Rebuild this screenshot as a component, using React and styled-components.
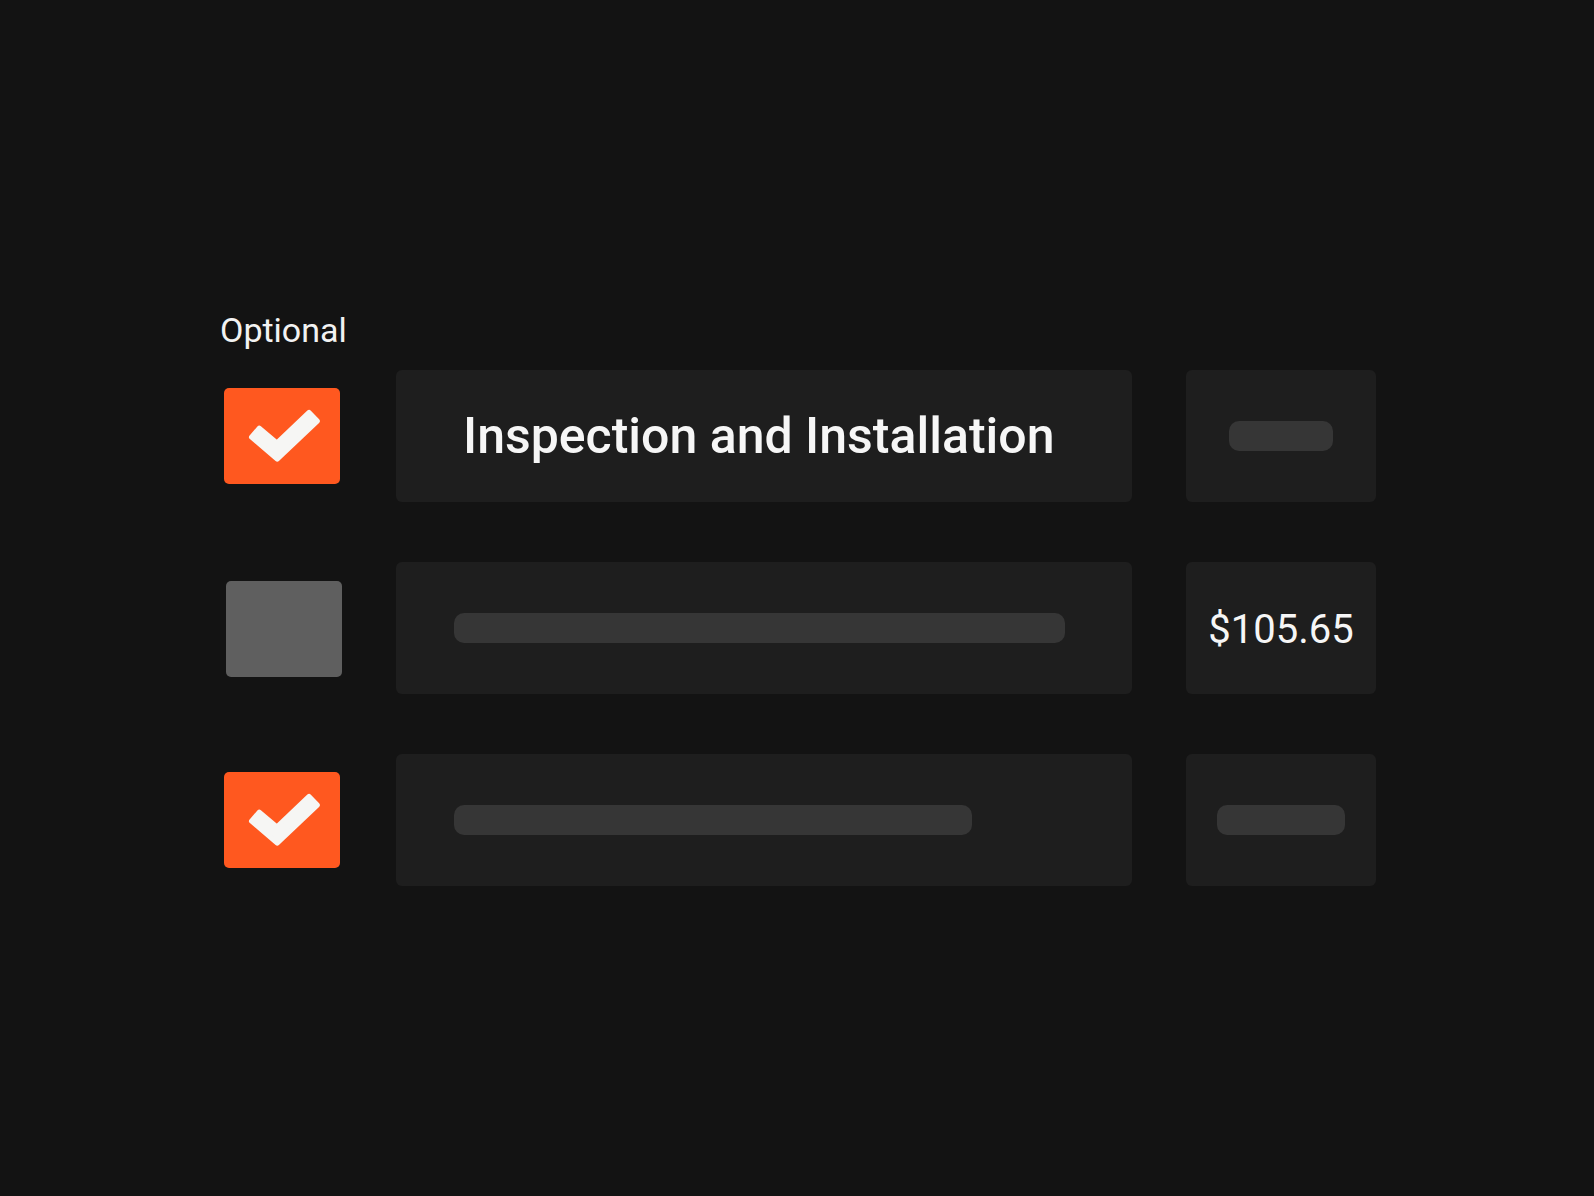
import React from "react";
import styled, { createGlobalStyle } from "styled-components";

const GlobalStyle = createGlobalStyle`
  html, body {
    margin: 0;
    padding: 0;
    background: #131313;
  }
  body {
    font-family: Roboto, "Noto Sans", "Liberation Sans", sans-serif;
    color: #f4f4f4;
  }
`;

const Page = styled.main`
  min-height: 100vh;
  box-sizing: border-box;
  padding: 310px 0 0 220px;
  background: #131313;
`;

const List = styled.section`
  width: 1156px;
  display: flex;
  flex-direction: column;
`;

const Label = styled.div`
  font-size: 34px;
  line-height: 40px;
  font-weight: 400;
  color: #f2f2f2;
  margin-bottom: 20px;
`;

const Rows = styled.div`
  display: flex;
  flex-direction: column;
  gap: 60px;
`;

const Row = styled.div`
  display: grid;
  grid-template-columns: 176px 736px 190px;
  height: 132px;
  & > :nth-child(3) {
    margin-left: 54px;
  }
`;

const CheckCell = styled.div`
  display: flex;
  align-items: center;
  padding-left: ${(p) => p.$offset}px;
  padding-top: ${(p) => p.$dy * 2}px;
`;

const Box = styled.div`
  width: 116px;
  height: 96px;
  border-radius: 5px;
  background: ${(p) => (p.$checked ? "#ff581f" : "#5f5f5f")};
  display: flex;
  align-items: center;
  justify-content: center;
`;

const Card = styled.div`
  background: #1e1e1e;
  border-radius: 6px;
  display: flex;
  align-items: center;
  box-sizing: border-box;
  padding: 0 ${(p) => (p.$center ? 0 : 58)}px;
  justify-content: ${(p) => (p.$center ? "center" : "flex-start")};
`;

const PriceCard = styled(Card)`
  width: 190px;
`;

const Title = styled.div`
  font-size: 50px;
  font-weight: 500;
  line-height: 1;
  color: #f6f6f6;
  padding-left: 9px;
  white-space: nowrap;
`;

const Price = styled.div`
  font-size: 40px;
  font-weight: 400;
  line-height: 1;
  color: #f6f6f6;
  padding-top: 3px;
  white-space: nowrap;
`;

const Pill = styled.div`
  height: 30px;
  border-radius: 10px;
  background: #363636;
  flex: none;
`;

const Check = () => (
  <svg width="116" height="96" viewBox="0 0 116 96" aria-hidden="true">
    <polygon
      points="35.3,40.05 52.8,54.94 85.06,24.36 93.32,33.08 53.21,71.06 27.51,49.19"
      fill="#f6f6f4"
      stroke="#f6f6f4"
      strokeWidth="5"
      strokeLinejoin="round"
    />
  </svg>
);

const Checkbox = ({ checked, offset = 4, dy = 0 }) => (
  <CheckCell $offset={offset} $dy={dy}>
    <Box $checked={checked}>{checked && <Check />}</Box>
  </CheckCell>
);

export default function App() {
  return (
    <>
      <GlobalStyle />
      <Page>
        <List>
          <Label>Optional</Label>
          <Rows>
            <Row>
              <Checkbox checked offset={4} />
              <Card>
                <Title>Inspection and Installation</Title>
              </Card>
              <PriceCard $center>
                <Pill style={{ width: 104 }} />
              </PriceCard>
            </Row>
            <Row>
              <Checkbox offset={6} dy={1} />
              <Card>
                <Pill style={{ width: 611 }} />
              </Card>
              <PriceCard $center>
                <Price>$105.65</Price>
              </PriceCard>
            </Row>
            <Row>
              <Checkbox checked offset={4} />
              <Card>
                <Pill style={{ width: 518 }} />
              </Card>
              <PriceCard $center>
                <Pill style={{ width: 128 }} />
              </PriceCard>
            </Row>
          </Rows>
        </List>
      </Page>
    </>
  );
}
